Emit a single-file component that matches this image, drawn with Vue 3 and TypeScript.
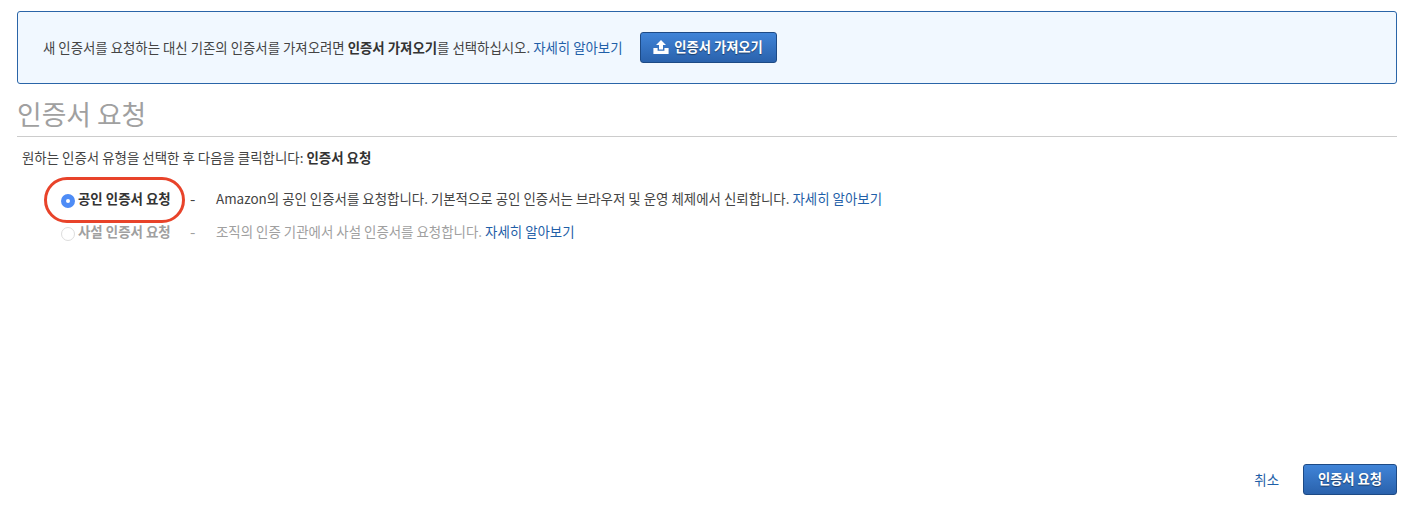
<script setup lang="ts">
interface Option {
  label: string
  desc: string
  active: boolean
}
const options: Option[] = [
  { label: '공인 인증서 요청', desc: 'Amazon의 공인 인증서를 요청합니다. 기본적으로 공인 인증서는 브라우저 및 운영 체제에서 신뢰합니다.', active: true },
  { label: '사설 인증서 요청', desc: '조직의 인증 기관에서 사설 인증서를 요청합니다.', active: false },
]
</script>

<template>
  <div class="page">
    <div class="banner">
      <p class="banner-text">
        새 인증서를 요청하는 대신 기존의 인증서를 가져오려면 <b>인증서 가져오기</b>를 선택하십시오. <a class="link">자세히 알아보기</a>
      </p>
      <button class="btn btn-import">
        <svg class="upload" viewBox="0 0 16 14" width="16" height="14">
          <path d="M8 0 L13 5 H10 V9.6 H6 V5 H3 Z" fill="#fff" />
          <path d="M0.4 8 H4.6 V10.8 H11.4 V8 H15.6 V14 H0.4 Z" fill="#fff" />
        </svg>
        인증서 가져오기
      </button>
    </div>

    <h1 class="title">인증서 요청</h1>
    <p class="intro">원하는 인증서 유형을 선택한 후 다음을 클릭합니다: <b>인증서 요청</b></p>

    <div class="options">
      <div v-for="o in options" :key="o.label" class="option" :class="{ off: !o.active }">
        <span class="radio" :class="{ on: o.active }"></span>
        <span class="label">{{ o.label }}</span>
        <span class="dash">-</span>
        <span class="desc">{{ o.desc }} <a class="link">자세히 알아보기</a></span>
      </div>
      <div class="marker"></div>
    </div>

    <div class="footer">
      <a class="link cancel">취소</a>
      <button class="btn btn-submit">인증서 요청</button>
    </div>
  </div>
</template>

<style>
html, body { margin: 0; background: #fff; }
</style>

<style scoped>
.page {
  width: 1428px;
  height: 508px;
  box-sizing: border-box;
  padding: 11px 31px 0 17px;
  display: flex;
  flex-direction: column;
  font-family: "Noto Sans CJK KR", "Noto Sans", sans-serif;
  font-size: 13.45px;
  color: #444;
  overflow: hidden;
}
b { font-weight: 700; color: #333; }
p { margin: 0; }
.link { color: #1f5fa8; }
.banner {
  height: 73px;
  box-sizing: border-box;
  border: 1px solid #2a65a8;
  border-radius: 3px;
  background: #f1f8ff;
  padding: 0 25px;
  display: flex;
  align-items: center;
  gap: 17px;
}
.banner-text { white-space: nowrap; font-size: 13.42px; margin-bottom: 2px; }
.btn {
  border: 1px solid #1d4a85;
  border-radius: 3px;
  background: linear-gradient(#4084d8, #2a62ac);
  color: #fff;
  font: 700 13.3px "Noto Sans CJK KR", "Noto Sans", sans-serif;
  text-shadow: 0 1px 1px rgba(0, 0, 0, 0.45);
  display: flex;
  align-items: center;
  justify-content: center;
  padding: 0 0 2px;
}
.btn-import { width: 137px; height: 31px; gap: 5px; }
.upload { flex: none; }
.title {
  margin: 12px 0 0;
  height: 40px;
  border-bottom: 1px solid #ccc;
  font-size: 26.8px;
  font-weight: 400;
  line-height: 35px;
  color: #a0a0a0;
}
.intro { margin: 11px 0 0 5px; line-height: 18px; }
.options {
  position: relative;
  margin-top: 15px;
  display: flex;
  flex-direction: column;
}
.option {
  height: 33px;
  display: flex;
  align-items: center;
  padding-left: 44px;
  white-space: nowrap;
}
.radio {
  width: 14px;
  height: 14px;
  box-sizing: border-box;
  border-radius: 50%;
  border: 1px solid #ddd;
  background: #fff;
  margin-top: 6px;
  flex: none;
}
.radio.on {
  border: 5px solid #4e8cf6;
  background: #fff;
}
.label { width: 112px; margin-left: 3px; font-weight: 700; color: #333; }
.dash { width: 26px; font-size: 15.5px; }
.off .label, .off .dash, .off .desc { color: #a0a0a0; }
.marker {
  position: absolute;
  left: 27px;
  top: -4px;
  width: 141px;
  height: 46px;
  box-sizing: border-box;
  border: 3px solid #e8432a;
  border-radius: 23px;
  pointer-events: none;
}
.footer {
  margin-top: auto;
  margin-bottom: 13px;
  display: flex;
  align-items: center;
  justify-content: flex-end;
  gap: 24px;
}
.cancel { margin-top: -2px; }
.btn-submit { width: 94px; height: 31px; }
</style>
